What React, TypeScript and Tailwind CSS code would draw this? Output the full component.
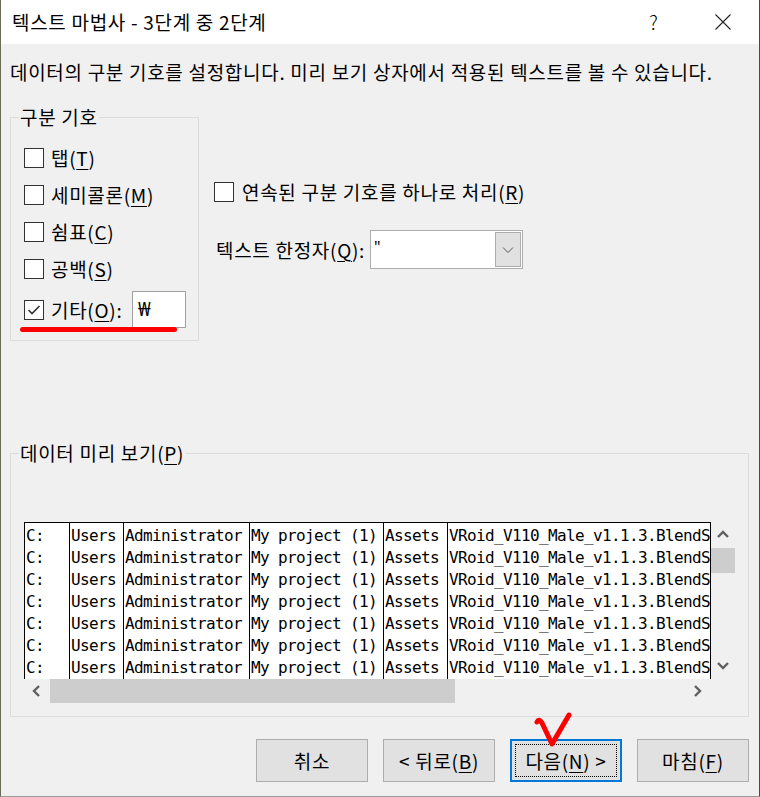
import React from "react";

const KR = "font-['Noto_Sans_CJK_KR','Noto_Sans',sans-serif]";
const T = "text-[19px] tracking-[0.7px]";
const MONO = "font-['DejaVu_Sans_Mono',monospace] text-[16px] leading-[22px] tracking-[-0.63px] whitespace-nowrap pl-[1px]";

function U({ children }: { children: React.ReactNode }) {
  return <span className="underline underline-offset-[3px] decoration-1">{children}</span>;
}

function Check({ checked }: { checked?: boolean }) {
  return (
    <div className="w-[20px] h-[20px] border border-[#333333] bg-white flex items-center justify-center shrink-0">
      {checked && (
        <svg width="14" height="12" viewBox="0 0 14 12">
          <polyline points="1.5,6 5,9.5 12.5,2" fill="none" stroke="#333333" strokeWidth="1.6" />
        </svg>
      )}
    </div>
  );
}

function Chev({ dir }: { dir: "up" | "down" | "left" | "right" }) {
  const pts = {
    up: "1,8 6,3 11,8",
    down: "1,3 6,8 11,3",
    left: "8,1 3,6 8,11",
    right: "3,1 8,6 3,11",
  }[dir];
  return (
    <svg width="12" height="12" viewBox="0 0 12 12">
      <polyline points={pts} fill="none" stroke="#606060" strokeWidth="2.4" />
    </svg>
  );
}

const cols: { w: string; t: string }[] = [
  { w: "w-[45px]", t: "C:" },
  { w: "w-[54px]", t: "Users" },
  { w: "w-[126px]", t: "Administrator" },
  { w: "w-[134px]", t: "My project (1)" },
  { w: "w-[64px]", t: "Assets" },
  { w: "flex-1", t: "VRoid_V110_Male_v1.1.3.BlendShapes" },
];

function Btn({ children, focused }: { children: React.ReactNode; focused?: boolean }) {
  if (focused) {
    return (
      <div className="w-[112px] h-[43px] bg-[#e1e1e1] border-2 border-[#0078d7] p-[3px]">
        <div className={`w-full h-full border border-dotted border-black flex items-center justify-center ${T} leading-[24px]`}>
          {children}
        </div>
      </div>
    );
  }
  return (
    <div className={`w-[112px] h-[43px] bg-[#e1e1e1] border border-[#adadad] flex items-center justify-center ${T} leading-[24px]`}>
      {children}
    </div>
  );
}

export default function App() {
  const rows = [
    { label: <>탭(<U>T</U>)</> },
    { label: <>세미콜론(<U>M</U>)</> },
    { label: <>쉼표(<U>C</U>)</> },
    { label: <>공백(<U>S</U>)</> },
  ];
  return (
    <div
      className={`relative w-[760px] h-[797px] bg-[#f0f0f0] border-l border-l-[#6b6b58] border-r border-r-[#4a4a4a] border-b border-b-[#9a9a9a] text-black overflow-hidden flex flex-col ${KR}`}
    >
      {/* title bar */}
      <div className="h-[44px] bg-white flex items-center pl-[11px] pr-[2px] shrink-0">
        <div className={`flex-1 ${T} leading-[24px] whitespace-nowrap`}>텍스트 마법사 - 3단계 중 2단계</div>
        <div className="w-[69px] h-full flex items-center justify-center text-[19px] font-light">?</div>
        <div className="w-[69px] h-full flex items-center justify-center">
          <svg width="16" height="16" viewBox="0 0 16 16">
            <path d="M0.5 0.5 L15.5 15.5 M15.5 0.5 L0.5 15.5" stroke="#222" strokeWidth="1.1" />
          </svg>
        </div>
      </div>

      {/* body */}
      <div className="px-[9px] flex flex-col">
        <div className={`mt-[16px] ${T} leading-[24px] whitespace-nowrap`}>
          데이터의 구분 기호를 설정합니다. 미리 보기 상자에서 적용된 텍스트를 볼 수 있습니다.
        </div>

        <div className="mt-[33px] flex">
          {/* group 1 */}
          <div className="w-[189px] h-[224px] border border-[#dcdcdc] flex flex-col">
            <div className={`-mt-[13px] ml-[8px] px-[1px] bg-[#f0f0f0] self-start ${T} leading-[24px]`}>구분 기호</div>
            <div className={`mt-[10px] pl-[13px] flex flex-col ${T}`}>
              {rows.map((r, i) => (
                <div key={i} className="h-[37px] flex items-center gap-[7px]">
                  <Check />
                  <span className="leading-[24px] whitespace-nowrap">{r.label}</span>
                </div>
              ))}
              <div className="mt-[4px] h-[37px] flex items-center gap-[7px]">
                <Check checked />
                <div className="w-[74px] min-w-0 shrink-0 leading-[24px] whitespace-nowrap overflow-visible">
                  기타(<U>O</U>):
                </div>
                <div className="w-[54px] h-[37px] shrink-0 bg-white border border-[#a0a0a0] flex items-center pl-[5px] text-[19px] tracking-normal font-['Noto_Sans',sans-serif]">
                  ₩
                </div>
              </div>
            </div>
          </div>

          {/* right column */}
          <div className={`ml-[15px] flex flex-col ${T}`}>
            <div className="mt-[65px] h-[20px] flex items-center gap-[8px]">
              <Check />
              <span className="leading-[24px] whitespace-nowrap">
                연속된 구분 기호를 하나로 처리(<U>R</U>)
              </span>
            </div>
            <div className="mt-[28px] h-[39px] flex items-center pl-[2px]">
              <span className="w-[154px] leading-[24px] whitespace-nowrap">
                텍스트 한정자(<U>Q</U>):
              </span>
              <div className="w-[153px] h-[39px] bg-white border border-[#adadad] flex">
                <div className="flex-1 pl-[3px] pt-[4px] text-[16px] leading-[24px] font-['Noto_Sans',sans-serif]">"</div>
                <div className="w-[26px] my-[1px] mr-[1px] bg-[#e1e1e1] border border-[#adadad] flex items-center justify-center">
                  <svg width="12" height="8" viewBox="0 0 12 8">
                    <polyline points="1,1.5 6,6.5 11,1.5" fill="none" stroke="#555" strokeWidth="1" />
                  </svg>
                </div>
              </div>
            </div>
          </div>
        </div>

        {/* group 2 */}
        <div className="mt-[112px] w-[739px] h-[264px] border border-[#dcdcdc] flex flex-col">
          <div className={`-mt-[13px] ml-[8px] px-[1px] bg-[#f0f0f0] self-start ${T} leading-[24px] whitespace-nowrap`}>
            데이터 미리 보기(<U>P</U>)
          </div>
          <div className="mt-[57px] ml-[13px] grid grid-cols-[687px_24px] grid-rows-[157px_24px]">
            <div className="bg-white border-t border-r border-black flex overflow-hidden">
              {cols.map((c, i) => (
                <div key={i} className={`${c.w} shrink-0 border-l border-black pt-[2px] overflow-hidden ${i === 5 ? "min-w-0" : ""}`}>
                  {Array.from({ length: 7 }).map((_, j) => (
                    <div key={j} className={MONO}>
                      {c.t}
                    </div>
                  ))}
                </div>
              ))}
            </div>
            <div className="flex flex-col">
              <div className="h-[26px] flex items-center justify-center">
                <Chev dir="up" />
              </div>
              <div className="h-[25px] bg-[#cdcdcd]" />
              <div className="flex-1" />
              <div className="h-[26px] flex items-center justify-center">
                <Chev dir="down" />
              </div>
            </div>
            <div className="flex">
              <div className="w-[26px] flex items-center justify-center">
                <Chev dir="left" />
              </div>
              <div className="w-[405px] bg-[#cdcdcd]" />
              <div className="flex-1" />
              <div className="w-[26px] flex items-center justify-center">
                <Chev dir="right" />
              </div>
            </div>
            <div />
          </div>
        </div>

        {/* buttons */}
        <div className="mt-[22px] flex justify-end gap-[15px] pr-[1px]">
          <Btn>취소</Btn>
          <Btn>
            &lt; 뒤로(<U>B</U>)
          </Btn>
          <Btn focused>
            다음(<U>N</U>) &gt;
          </Btn>
          <Btn>
            마침(<U>F</U>)
          </Btn>
        </div>
      </div>

      {/* annotations */}
      <div className="absolute left-[19px] top-[327px] w-[157px] h-[5px] rounded-full bg-[#ff0000]" />
      <svg className="absolute left-[529px] top-[708px]" width="45" height="45" viewBox="0 0 45 45">
        <path
          d="M7 14 Q9 10 12 15 L22 36 L39 7"
          fill="none"
          stroke="#ff0000"
          strokeWidth="5"
          strokeLinecap="round"
          strokeLinejoin="round"
        />
      </svg>
    </div>
  );
}
